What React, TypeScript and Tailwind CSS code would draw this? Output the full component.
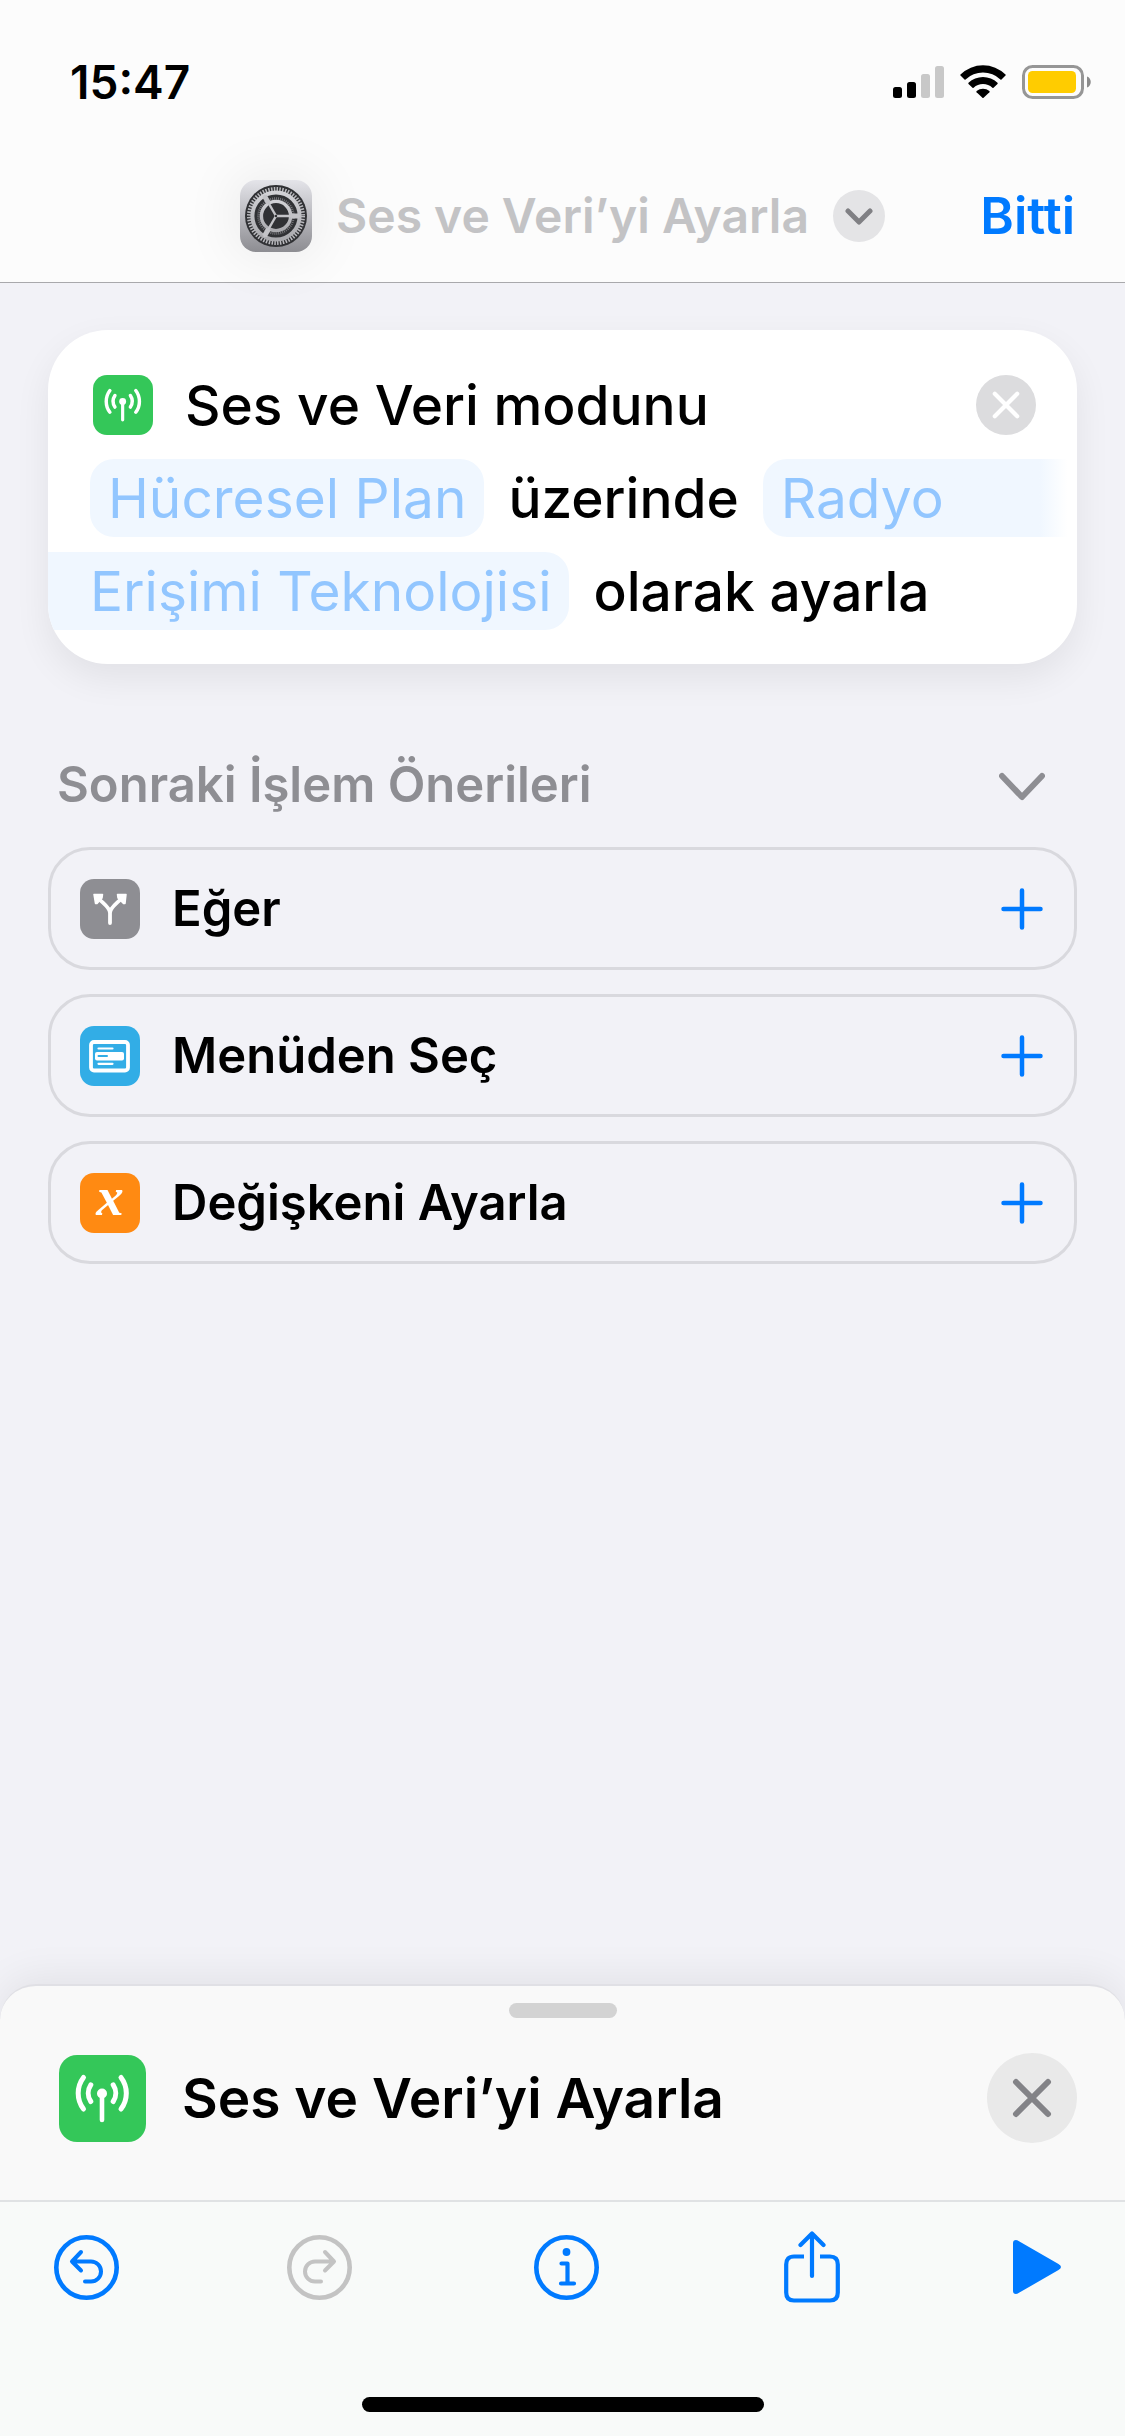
import React from 'react';

type IconProps = { className?: string };

const SettingsIcon = () => (
  <svg viewBox="0 0 72 72" className="size-[72px] rounded-[16px] shadow-[0_0_60px_rgba(0,0,0,0.09)]" aria-hidden="true">
    <defs>
      <linearGradient id="metal" x1="0" y1="0" x2="0" y2="1">
        <stop offset="0" stopColor="#e4e4e9" />
        <stop offset="1" stopColor="#8d8d92" />
      </linearGradient>
      <linearGradient id="gear" x1="0" y1="0" x2="0" y2="1">
        <stop offset="0" stopColor="#d2d2d6" />
        <stop offset="1" stopColor="#a9a9ad" />
      </linearGradient>
    </defs>
    <rect width="72" height="72" fill="url(#metal)" />
    <circle cx="36" cy="36" r="31" fill="#303134" />
    {/* outer teeth */}
    <circle cx="36" cy="36" r="27" fill="none" stroke="#b9b9bd" strokeWidth="4" strokeDasharray="1.5 1.33" />
    <circle cx="36" cy="36" r="23.6" fill="none" stroke="url(#gear)" strokeWidth="4" />
    {/* inner teeth */}
    <circle cx="36" cy="36" r="17.5" fill="none" stroke="#77777b" strokeWidth="2.6" strokeDasharray="1 1" />
    <circle cx="36" cy="36" r="14.6" fill="none" stroke="url(#gear)" strokeWidth="3.4" />
    <g stroke="#c3c3c7" strokeWidth="2.4">
      <path d="M36 36H60" />
      <path d="M36 36L24 15.2" />
      <path d="M36 36L24 56.8" />
    </g>
    <g stroke="#c3c3c7" strokeWidth="5">
      <path d="M51 36H59" />
      <path d="M28.5 23L24.5 16" />
      <path d="M28.5 49L24.5 56" />
    </g>
    <circle cx="36" cy="36" r="1.2" fill="#303134" />
  </svg>
);

const AntennaIcon = ({ className }: IconProps) => (
  <svg viewBox="0 0 87 87" className={className} fill="none" stroke="#fff" strokeLinecap="round" aria-hidden="true">
    <circle cx="43" cy="38.5" r="5" fill="#fff" stroke="none" />
    <path d="M43 39V65" strokeWidth="4.6" />
    <g strokeWidth="5">
      <path d="M31.8 29.8A15 15 0 0 0 31.8 46.5" />
      <path d="M54.2 29.8A15 15 0 0 1 54.2 46.5" />
      <path d="M24.5 22.5A26 26 0 0 0 24.5 54" />
      <path d="M62 22.5A26 26 0 0 1 62 54" />
    </g>
  </svg>
);

const BranchIcon = () => (
  <svg viewBox="0 0 60 60" className="size-[60px]" aria-hidden="true">
    <path d="M30 44V34C30 29 24 25 19.5 20.5M30 34C30 29 36 25 40.5 20.5" fill="none" stroke="#fff" strokeWidth="3.8" strokeLinecap="round" />
    <path d="M14 15.5H22.5L22 19L17 24.5H15.5Z M46 15.5H37.5L38 19L43.5 24.5H45Z" fill="#fff" stroke="#fff" strokeWidth="1.5" strokeLinejoin="round" />
  </svg>
);

const MenuCardIcon = () => (
  <svg viewBox="0 0 60 60" className="size-[60px]" aria-hidden="true">
    <rect x="11" y="16" width="37" height="28.5" rx="3" fill="none" stroke="#fff" strokeWidth="3.8" />
    <path d="M18.5 22.5H32.5M18.5 37.8H32.5" stroke="#fff" strokeWidth="2.2" strokeLinecap="round" />
    <rect x="15" y="26" width="29" height="8.5" rx="2" fill="#fff" />
    <path d="M18.500 30H27" stroke="#32ade6" strokeWidth="2" strokeLinecap="round" />
  </svg>
);

const PlusIcon = () => (
  <svg viewBox="0 0 42 42" className="size-[42px]" fill="none" stroke="#007aff" strokeWidth="4.5" strokeLinecap="round" aria-hidden="true">
    <path d="M21 2.5V39.5M2.5 21H39.5" />
  </svg>
);

const CrossIcon = ({ className }: IconProps) => (
  <svg viewBox="0 0 30 30" className={className} fill="none" stroke="currentColor" strokeLinecap="round" aria-hidden="true">
    <path d="M3 3L27 27M27 3L3 27" />
  </svg>
);

const StatusIcons = () => (
  <div className="flex items-center gap-4">
    <svg viewBox="0 0 51 34" className="w-[51px] h-[34px]" aria-hidden="true">
      <rect x="0" y="22" width="9" height="11" rx="2.5" />
      <rect x="14" y="17" width="9" height="16" rx="2.5" />
      <rect x="28" y="9" width="9" height="24" rx="2.5" fill="#c8c8c8" />
      <rect x="42" y="1" width="9" height="32" rx="2.5" fill="#c8c8c8" />
    </svg>
    <svg viewBox="0 0 46 34" className="w-[46px] h-[34px]" aria-hidden="true">
      <path d="M0.5 9.5A32 32 0 0 1 45.5 9.5Q46 10 45.5 10.6L41.5 14.4Q41 14.9 40.4 14.4A25.5 25.5 0 0 0 5.6 14.4Q5 14.9 4.5 14.4L0.5 10.6Q0 10 0.5 9.5Z" />
      <path d="M8.5 17.8A21 21 0 0 1 37.5 17.8Q38 18.3 37.5 18.9L33.5 22.7Q33 23.2 32.4 22.7A14 14 0 0 0 13.6 22.7Q13 23.2 12.5 22.7L8.5 18.9Q8 18.3 8.5 17.8Z" />
      <path d="M16.6 26A10.5 10.5 0 0 1 29.4 26Q30 26.6 29.4 27.2L23.6 32.8Q23 33.3 22.4 32.8L16.6 27.2Q16 26.6 16.6 26Z" />
    </svg>
    <svg viewBox="0 0 70 34" className="w-[70px] h-[34px]" aria-hidden="true">
      <rect x="1.5" y="1.5" width="59" height="31" rx="9" fill="none" stroke="#969696" strokeWidth="3" />
      <rect x="6" y="6" width="48" height="22" rx="4.5" fill="#ffcc00" />
      <path d="M65 11.5C70 13 70 21 65 22.5Z" fill="#8c8c8c" />
    </svg>
  </div>
);

const UndoIcon = ({ className }: IconProps) => (
  <svg viewBox="0 0 65 65" className={className} fill="none" stroke="currentColor" strokeLinecap="round" strokeLinejoin="round" aria-hidden="true">
    <circle cx="32.5" cy="32.5" r="30.2" strokeWidth="4.6" />
    <path d="M27 17L18 26.5L27 35.5M18.5 26.5H37A10 10 0 0 1 37 46.5H31" strokeWidth="4" />
  </svg>
);

const InfoIcon = () => (
  <svg viewBox="0 0 65 65" className="size-[65px]" fill="none" stroke="#007aff" strokeLinecap="round" strokeLinejoin="round" aria-hidden="true">
    <circle cx="32.5" cy="32.5" r="30.2" strokeWidth="4.6" />
    <circle cx="32.5" cy="17" r="3.9" fill="#007aff" stroke="none" />
    <path d="M27.5 28.5H33.5V48.5M27 48.5H40" strokeWidth="4.2" />
  </svg>
);

const ShareIcon = () => (
  <svg viewBox="0 0 56 72" className="w-[56px] h-[72px]" fill="none" stroke="#007aff" strokeWidth="4.2" aria-hidden="true">
    <path d="M20 25.5H10Q2.2 25.5 2.2 33.5V61.5Q2.2 69.5 10 69.5H46Q53.8 69.5 53.8 61.5V33.5Q53.8 25.5 46 25.5H36" />
    <path d="M28 3V45M16.5 14L28 2.5L39.5 14" strokeLinecap="round" strokeLinejoin="round" />
  </svg>
);

const PlayIcon = () => (
  <svg viewBox="0 0 48 56" className="w-[48px] h-[56px]" fill="#007aff" aria-hidden="true">
    <path d="M0 4Q0 1 3 1Q4 1 6 2.2L45.5 25Q48 26.5 48 28Q48 29.5 45.5 31L6 53.8Q4 55 3 55Q0 55 0 52Z" />
  </svg>
);

const suggestions = [
  { label: 'Eğer', bg: 'bg-[#8e8e93]', icon: <BranchIcon /> },
  { label: 'Menüden Seç', bg: 'bg-[#32ade6]', icon: <MenuCardIcon /> },
  {
    label: 'Değişkeni Ayarla',
    bg: 'bg-[#ff8a12]',
    icon: <span className="font-['Liberation_Serif',serif] font-bold italic text-[55px] leading-[48px] pb-3 text-white">x</span>,
  },
];

const App = () => {
  return (
    <div lang="tr" className="min-h-screen flex flex-col bg-[#f2f2f7] text-black font-['Inter',sans-serif]">
      <header className="bg-[#fcfcfc] border-b border-[#a9a9ac]">
        <div className="flex items-center justify-between pt-[60px] pl-[70px] pr-[33px]">
          <span className="font-semibold text-[46px] leading-[44px]">15:47</span>
          <StatusIcons />
        </div>

        <div className="grid grid-cols-[1fr_auto_1fr] items-center pt-[76px] pb-[30px] px-[50px]">
          <button type="button" className="col-start-2 flex items-center gap-6">
            <SettingsIcon />
            <span className="font-semibold text-[48px] leading-[60px] text-[#c3c3c5]">Ses ve Veri’yi Ayarla</span>
            <span className="size-[52px] rounded-full bg-[#e4e4e6] flex items-center justify-center">
              <svg viewBox="0 0 28 18" className="w-[28px] h-[18px]" fill="none" stroke="#808084" strokeWidth="5" strokeLinecap="round" strokeLinejoin="round" aria-hidden="true">
                <path d="M3 4L14 15L25 4" />
              </svg>
            </span>
          </button>
          <button type="button" className="justify-self-end font-semibold text-[51px] leading-[60px] text-[#007aff]">
            Bitti
          </button>
        </div>
      </header>

      <main className="flex-1 px-12 pt-[47px]">
        <section className="bg-white rounded-[60px] overflow-hidden pt-9 pb-[34px] flex flex-col gap-[15px] text-[55px] leading-[78px] shadow-[0_14px_36px_rgba(0,0,0,0.07)]">
          <div className="flex items-center pl-[45px] pr-[41px] gap-8">
            <span className="size-[60px] rounded-[14px] bg-[#34c759]">
              <AntennaIcon className="size-[60px]" />
            </span>
            <h2 className="flex-1 font-medium">Ses ve Veri modunu</h2>
            <button type="button" aria-label="Sil" className="size-[60px] rounded-full bg-[#dcdcde] text-white flex items-center justify-center">
              <CrossIcon className="size-[28px] stroke-[4.5]" />
            </button>
          </div>

          <div className="flex items-center pl-[42px] gap-6">
            <button type="button" className="rounded-[24px] bg-[#f0f7ff] text-[#92c6ff] px-[18px]">
              Hücresel Plan
            </button>
            <span className="font-medium">üzerinde</span>
            <button type="button" className="flex-1 text-left rounded-l-[24px] bg-linear-to-r from-[#f0f7ff] from-88% to-white to-97% text-[#92c6ff] px-[18px]">
              Radyo
            </button>
          </div>

          <div className="flex items-center gap-6">
            <button type="button" className="rounded-r-[24px] bg-[#f0f7ff] text-[#92c6ff] pl-[42px] pr-[18px]">
              Erişimi Teknolojisi
            </button>
            <span className="font-medium">olarak ayarla</span>
          </div>
        </section>

        <section className="pt-[91px]">
          <button type="button" className="w-full flex items-center justify-between pl-[9px] pr-8 text-[#8e8e93]">
            <span className="font-semibold text-[49px] leading-[60px]">Sonraki İşlem Önerileri</span>
            <svg viewBox="0 0 46 36" className="w-[46px] h-[36px]" fill="none" stroke="currentColor" strokeWidth="6" strokeLinecap="round" strokeLinejoin="round" aria-hidden="true">
              <path d="M3 9L23 30L43 9" />
            </svg>
          </button>

          <ul className="pt-8 flex flex-col gap-6">
            {suggestions.map((item) => (
              <li key={item.label}>
                <button type="button" className="w-full h-[123px] rounded-[42px] border-3 border-[#d9d9de] flex items-center text-left pl-[29px] pr-[31px] gap-8">
                  <span className={`size-[60px] rounded-[14px] flex items-center justify-center ${item.bg}`}>{item.icon}</span>
                  <span className="flex-1 font-semibold text-[49px] leading-[60px]">{item.label}</span>
                  <PlusIcon />
                </button>
              </li>
            ))}
          </ul>
        </section>
      </main>

      <section className="bg-[#f9f9f9] rounded-t-[36px] border-t-2 border-[#e0e0e5] shadow-[0_-6px_40px_rgba(0,0,0,0.07)] pt-[17px]">
        <div className="mx-auto w-[108px] h-[15px] rounded-full bg-[#d3d3d3]" />
        <div className="flex items-center gap-9 pt-[35px] pb-[57px] pl-[59px] pr-12">
          <span className="size-[87px] rounded-[18px] bg-[#34c759]">
            <AntennaIcon className="size-[87px]" />
          </span>
          <h1 className="flex-1 font-semibold text-[55px] leading-[80px]">Ses ve Veri’yi Ayarla</h1>
          <button type="button" aria-label="Kapat" className="size-[90px] rounded-full bg-[#e9e9e9] text-[#838387] flex items-center justify-center">
            <CrossIcon className="size-[40px] stroke-[4.5]" />
          </button>
        </div>
      </section>

      <footer className="bg-[#f8faf9] border-t-2 border-[#e0e2e4] pt-[29px] pb-6">
        <nav className="flex items-center justify-between pl-[54px] pr-16">
          <button type="button" aria-label="Geri al" className="text-[#007aff]">
            <UndoIcon className="size-[65px]" />
          </button>
          <button type="button" aria-label="Yinele" disabled className="w-[91px] flex justify-center text-[#c3c3c3]">
            <UndoIcon className="size-[65px] -scale-x-100" />
          </button>
          <button type="button" aria-label="Bilgi" className="w-[91px] flex justify-center">
            <InfoIcon />
          </button>
          <button type="button" aria-label="Paylaş" className="w-[91px] flex justify-center">
            <ShareIcon />
          </button>
          <button type="button" aria-label="Çalıştır">
            <PlayIcon />
          </button>
        </nav>
        <div className="mx-auto mt-[94px] w-[402px] h-[15px] rounded-full bg-black" />
      </footer>
    </div>
  );
};

export default App;
